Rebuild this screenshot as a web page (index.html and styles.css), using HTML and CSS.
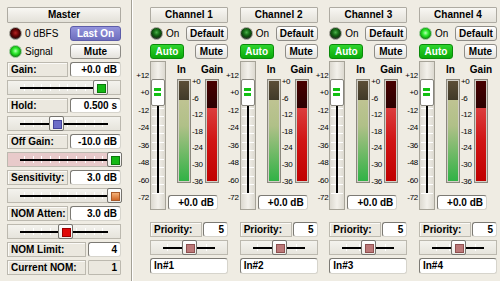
FILE: index.html
```html
<!DOCTYPE html>
<html lang="en">
<head>
    <meta charset="UTF-8">
    <meta name="viewport" content="width=device-width, initial-scale=1.0">
    <title>Auto Mixer</title>
    <link rel="stylesheet" href="styles.css">
</head>
<body>

<div class="mixer">

    <!-- master section -->
    <div class="master">
        <div class="title">Master</div>
        <div class="row">
            <span class="led led-red"></span>
            <span class="led-text">0 dBFS</span>
            <span class="btn btn-purple btn-wide">Last On</span>
        </div>
        <div class="row">
            <span class="led led-lit"></span>
            <span class="led-text">Signal</span>
            <span class="btn btn-wide">Mute</span>
        </div>

        <div class="field">
            <span class="label">Gain:</span>
            <span class="value">+0.0 dB</span>
        </div>
        <div class="slider"><span class="knob knob-green" style="left:85px"></span></div>

        <div class="field">
            <span class="label">Hold:</span>
            <span class="value">0.500 s</span>
        </div>
        <div class="slider"><span class="knob knob-blue" style="left:41px"></span></div>

        <div class="field">
            <span class="label">Off Gain:</span>
            <span class="value">-10.0 dB</span>
        </div>
        <div class="slider slider-pink"><span class="knob knob-green" style="left:99px"></span></div>

        <div class="field">
            <span class="label">Sensitivity:</span>
            <span class="value">3.0 dB</span>
        </div>
        <div class="slider"><span class="knob knob-orange" style="left:99px"></span></div>

        <div class="field">
            <span class="label">NOM Atten:</span>
            <span class="value">3.0 dB</span>
        </div>
        <div class="slider"><span class="knob knob-red" style="left:50px"></span></div>

        <div class="field field-wide">
            <span class="label">NOM Limit:</span>
            <span class="value">4</span>
        </div>
        <div class="field field-wide">
            <span class="label">Current NOM:</span>
            <span class="value value-flat">1</span>
        </div>
    </div>

    <div class="divider"></div>

    <!-- input channels -->
    <div class="channels">

        <div class="channel">
            <div class="title">Channel 1</div>
            <div class="row">
                <span class="led led-dim"></span>
                <span class="led-text">On</span>
                <span class="btn btn-default">Default</span>
            </div>
            <div class="row">
                <span class="btn btn-auto">Auto</span>
                <span class="btn btn-mute">Mute</span>
            </div>
            <div class="strip">
                <div class="fader">
                    <div class="fader-scale">
                        <span>+12</span><span>+0</span><span>-12</span><span>-24</span>
                        <span>-36</span><span>-48</span><span>-60</span><span>-72</span>
                    </div>
                    <span class="fader-knob" style="top:17px"></span>
                </div>
                <div class="meters">
                    <div class="meter-heads"><span>In</span><span></span><span>Gain</span></div>
                    <div class="meter-row">
                        <div class="meter meter-in"><span class="meter-dark" style="height:19px"></span></div>
                        <div class="meter-scale">
                            <span>+0</span><span>-6</span><span>-12</span><span>-18</span>
                            <span>-24</span><span>-30</span><span>-36</span>
                        </div>
                        <div class="meter meter-gain"><span class="meter-dark" style="height:27px"></span></div>
                    </div>
                    <div class="value out">+0.0 dB</div>
                </div>
            </div>
            <div class="field field-priority">
                <span class="label">Priority:</span>
                <span class="value">5</span>
            </div>
            <div class="slider slider-small"><span class="knob knob-rose" style="left:31px"></span></div>
            <div class="name">In#1</div>
        </div>

        <div class="channel">
            <div class="title">Channel 2</div>
            <div class="row">
                <span class="led led-dim"></span>
                <span class="led-text">On</span>
                <span class="btn btn-default">Default</span>
            </div>
            <div class="row">
                <span class="btn btn-auto">Auto</span>
                <span class="btn btn-mute">Mute</span>
            </div>
            <div class="strip">
                <div class="fader">
                    <div class="fader-scale">
                        <span>+12</span><span>+0</span><span>-12</span><span>-24</span>
                        <span>-36</span><span>-48</span><span>-60</span><span>-72</span>
                    </div>
                    <span class="fader-knob" style="top:17px"></span>
                </div>
                <div class="meters">
                    <div class="meter-heads"><span>In</span><span></span><span>Gain</span></div>
                    <div class="meter-row">
                        <div class="meter meter-in"><span class="meter-dark" style="height:19px"></span></div>
                        <div class="meter-scale">
                            <span>+0</span><span>-6</span><span>-12</span><span>-18</span>
                            <span>-24</span><span>-30</span><span>-36</span>
                        </div>
                        <div class="meter meter-gain"><span class="meter-dark" style="height:27px"></span></div>
                    </div>
                    <div class="value out">+0.0 dB</div>
                </div>
            </div>
            <div class="field field-priority">
                <span class="label">Priority:</span>
                <span class="value">5</span>
            </div>
            <div class="slider slider-small"><span class="knob knob-rose" style="left:31px"></span></div>
            <div class="name">In#2</div>
        </div>

        <div class="channel">
            <div class="title">Channel 3</div>
            <div class="row">
                <span class="led led-dim"></span>
                <span class="led-text">On</span>
                <span class="btn btn-default">Default</span>
            </div>
            <div class="row">
                <span class="btn btn-auto">Auto</span>
                <span class="btn btn-mute">Mute</span>
            </div>
            <div class="strip">
                <div class="fader">
                    <div class="fader-scale">
                        <span>+12</span><span>+0</span><span>-12</span><span>-24</span>
                        <span>-36</span><span>-48</span><span>-60</span><span>-72</span>
                    </div>
                    <span class="fader-knob" style="top:17px"></span>
                </div>
                <div class="meters">
                    <div class="meter-heads"><span>In</span><span></span><span>Gain</span></div>
                    <div class="meter-row">
                        <div class="meter meter-in"><span class="meter-dark" style="height:19px"></span></div>
                        <div class="meter-scale">
                            <span>+0</span><span>-6</span><span>-12</span><span>-18</span>
                            <span>-24</span><span>-30</span><span>-36</span>
                        </div>
                        <div class="meter meter-gain"><span class="meter-dark" style="height:27px"></span></div>
                    </div>
                    <div class="value out">+0.0 dB</div>
                </div>
            </div>
            <div class="field field-priority">
                <span class="label">Priority:</span>
                <span class="value">5</span>
            </div>
            <div class="slider slider-small"><span class="knob knob-rose" style="left:31px"></span></div>
            <div class="name">In#3</div>
        </div>

        <div class="channel">
            <div class="title">Channel 4</div>
            <div class="row">
                <span class="led led-lit"></span>
                <span class="led-text">On</span>
                <span class="btn btn-default">Default</span>
            </div>
            <div class="row">
                <span class="btn btn-auto">Auto</span>
                <span class="btn btn-mute">Mute</span>
            </div>
            <div class="strip">
                <div class="fader">
                    <div class="fader-scale">
                        <span>+12</span><span>+0</span><span>-12</span><span>-24</span>
                        <span>-36</span><span>-48</span><span>-60</span><span>-72</span>
                    </div>
                    <span class="fader-knob" style="top:17px"></span>
                </div>
                <div class="meters">
                    <div class="meter-heads"><span>In</span><span></span><span>Gain</span></div>
                    <div class="meter-row">
                        <div class="meter meter-in"><span class="meter-dark" style="height:19px"></span></div>
                        <div class="meter-scale">
                            <span>+0</span><span>-6</span><span>-12</span><span>-18</span>
                            <span>-24</span><span>-30</span><span>-36</span>
                        </div>
                        <div class="meter meter-gain"><span class="meter-dark" style="height:27px"></span></div>
                    </div>
                    <div class="value out">+0.0 dB</div>
                </div>
            </div>
            <div class="field field-priority">
                <span class="label">Priority:</span>
                <span class="value">5</span>
            </div>
            <div class="slider slider-small"><span class="knob knob-rose" style="left:31px"></span></div>
            <div class="name">In#4</div>
        </div>

    </div>
</div>

</body>
</html>
```

FILE: styles.css
```css
* {
    box-sizing: border-box;
}

body {
    margin: 0;
    background: #efece3;
    font-family: "Liberation Sans", Arial, sans-serif;
    font-size: 10px;
    font-weight: bold;
    color: #000;
}

.mixer {
    display: flex;
    height: 281px;
    overflow: hidden;
}

/* ---------- common pieces ---------- */

.title {
    height: 16px;
    line-height: 14px;
    text-align: center;
    border: 1px solid #aeaba2;
    border-radius: 1px;
    background: linear-gradient(#f8f7f3, #e3e1d9);
}

.row {
    display: flex;
    align-items: center;
    height: 15px;
}

.led {
    flex: none;
    width: 13px;
    height: 13px;
    border-radius: 50%;
    border: 1px solid #9a9890;
}

.led-red {
    background: radial-gradient(circle at 50% 45%, #b42222 0, #760a0a 30%, #420000 55%, #3a3434 72%, #6e6c68 100%);
}

.led-lit {
    border-color: #8fc48f;
    background: radial-gradient(circle at 50% 45%, #b8ffb8 0, #3cf03c 30%, #14bc14 55%, #1c7a1c 72%, #7cc07c 100%);
}

.led-dim {
    background: radial-gradient(circle at 50% 40%, #4cb04c 0, #1a701a 30%, #0c460c 55%, #343a34 72%, #6e6c68 100%);
}

.led-text {
    font-weight: normal;
    margin-left: 3px;
}

.btn {
    display: block;
    height: 15px;
    line-height: 13px;
    text-align: center;
    border: 1px solid #8e8c86;
    border-radius: 3px;
    background: linear-gradient(#ffffff, #e4e2dc);
}

.btn-purple {
    color: #fff;
    border-color: #5c5ca8;
    background: linear-gradient(#9494dc, #6e6ebe);
}

.btn-auto {
    width: 34px;
    color: #fff;
    border-color: #0a8a0a;
    background: linear-gradient(#2ed42e, #0aaa0a);
}

.btn-wide {
    width: 51px;
    margin-left: auto;
}

.btn-default {
    width: 42px;
    margin-left: auto;
}

.btn-mute {
    width: 33px;
    margin-left: auto;
}

.field {
    display: flex;
    justify-content: space-between;
    height: 15px;
}

.label,
.value {
    display: block;
    height: 15px;
    line-height: 13px;
}

.label {
    width: 61px;
    padding-left: 3px;
    border: 1px solid #bcb9af;
    background: #ebe8df;
    box-shadow: inset 1px 1px 0 #fbfaf7;
}

.value {
    width: 51px;
    padding-right: 3px;
    text-align: right;
    background: #fff;
    border: 1px solid;
    border-color: #7c7a74 #d6d4cc #d6d4cc #7c7a74;
    border-radius: 3px;
}

.value-flat {
    background: #ebe8df;
    border-color: #bcb9af;
    border-radius: 1px;
}

.field-wide .label {
    width: 79px;
}

.field-wide .value {
    width: 33px;
}

/* horizontal sliders */

.slider {
    position: relative;
    height: 15px;
    border: 1px solid #bcb9af;
    background: linear-gradient(#f4f3ee, #e6e4dc);
}

.slider::before {
    content: "";
    position: absolute;
    left: 16px;
    right: 14px;
    top: 3px;
    height: 7px;
    background: repeating-linear-gradient(90deg, #fff 0 1px, transparent 1px 8.7px);
}

.slider::after {
    content: "";
    position: absolute;
    left: 12px;
    right: 12px;
    top: 5.5px;
    height: 2px;
    background: #000;
}

.slider-pink {
    background: #e8caca;
}

.slider-small::before {
    left: 16px;
    right: 12px;
    background: repeating-linear-gradient(90deg, #fff 0 1px, transparent 1px 13px);
}

.knob {
    position: absolute;
    z-index: 1;
    top: -1px;
    width: 15px;
    height: 15px;
    border: 1px solid #76746e;
    border-radius: 2px;
    background: linear-gradient(#ffffff, #ecebe6);
}

.knob::after {
    content: "";
    position: absolute;
    left: 3px;
    top: 3px;
    width: 7px;
    height: 7px;
}

.knob-green::after {
    background: #14b814;
    border: 1px solid #0a7a0a;
}

.knob-blue::after {
    background: #6c6cc8;
    border: 1px solid #44449a;
}

.knob-orange::after {
    background: linear-gradient(#f4b078, #d06828);
    border: 1px solid #a85a2a;
}

.knob-red::after {
    background: #e00808;
    border: 1px solid #9a0000;
}

.knob-rose::after {
    background: #bc7878;
    border: 1px solid #8e5050;
}

/* ---------- master ---------- */

.master {
    flex: none;
    width: 114px;
    margin: 7px 0 0 7px;
    display: flex;
    flex-direction: column;
    gap: 3px;
}

.master .row .led {
    margin-left: 2px;
}

.divider {
    flex: none;
    width: 2px;
    margin-left: 10px;
    border-left: 1px solid #a4a196;
    border-right: 1px solid #fff;
}

/* ---------- channels ---------- */

.channels {
    margin: 7px 0 0 17px;
    display: grid;
    grid-template-columns: repeat(4, 78px);
    column-gap: 11.67px;
    align-items: start;
}

.channel {
    display: flex;
    flex-direction: column;
    gap: 3px;
}

.strip {
    display: flex;
    margin-top: -1px;
    height: 149px;
}

.fader {
    position: relative;
    flex: none;
    width: 16px;
    height: 149px;
    border: 1px solid #a6a398;
    background: linear-gradient(90deg, #dcd9d0, #f3f1eb 50%, #dcd9d0);
}

.fader::before {
    content: "";
    position: absolute;
    left: 1px;
    right: 1px;
    top: 46px;
    bottom: 15px;
    background: repeating-linear-gradient(180deg, #fff 0 1px, transparent 1px 8.5px);
}

.fader::after {
    content: "";
    position: absolute;
    left: 6px;
    width: 2px;
    top: 30px;
    bottom: 16px;
    background: #000;
}

.fader-knob {
    position: absolute;
    z-index: 1;
    left: 0;
    width: 14px;
    height: 27px;
    border: 1px solid #88867e;
    border-radius: 2px;
    background: #fff;
}

.fader-knob::after {
    content: "";
    position: absolute;
    left: 2px;
    top: 8px;
    width: 7px;
    height: 8px;
    background: linear-gradient(#12c012 0 3px, transparent 3px 5px, #12c012 5px 8px);
}

.fader-scale {
    position: absolute;
    right: 100%;
    top: 5px;
    margin-right: 2px;
    font-size: 8px;
    font-weight: normal;
    text-align: right;
    letter-spacing: -0.3px;
}

.fader-scale span {
    display: block;
    height: 17.43px;
    line-height: 17.43px;
}

.meters {
    margin-left: 2px;
    width: 60px;
}

.meter-heads {
    display: grid;
    grid-template-columns: 14px 14px 14px;
    margin: 2px 0 0 9px;
    height: 13px;
    line-height: 13px;
}

.meter-heads span:first-child {
    text-align: left;
}

.meter-heads span:last-child {
    text-align: center;
    margin-left: -6px;
    margin-right: -6px;
}

.meter-row {
    display: flex;
    margin-top: 3px;
    padding-left: 9px;
    height: 104px;
}

.meter {
    width: 14px;
    height: 104px;
    border: 1px solid #8a877d;
    padding: 1px;
    background-clip: content-box;
    box-shadow: inset 0 0 0 1px #d2cfc6;
}

.meter-dark {
    display: block;
}

.meter-in {
    background-image: linear-gradient(#cac69a, #b0c088 45%, #2eb244);
}

.meter-in .meter-dark {
    background: linear-gradient(#5c4e36, #403a28);
}

.meter-gain {
    background-image: linear-gradient(#e46060, #d01414 60%, #c00000);
}

.meter-gain .meter-dark {
    background: linear-gradient(#480000, #2c0000);
}

.meter-scale {
    width: 14px;
    margin-top: -5px;
    padding-left: 1px;
    font-size: 8px;
    font-weight: normal;
    letter-spacing: -0.3px;
}

.meter-scale span {
    display: block;
    height: 16.6px;
    line-height: 16.6px;
}

.out {
    width: 50px;
    margin-top: 12px;
}

.field-priority {
    margin-top: 9px;
}

.field-priority .label {
    width: 52px;
}

.field-priority .value {
    width: 25px;
}

.name {
    height: 16px;
    line-height: 14px;
    padding-left: 3px;
    background: #fff;
    border: 1px solid;
    border-color: #7c7a74 #d6d4cc #d6d4cc #7c7a74;
    border-radius: 3px;
}
```
